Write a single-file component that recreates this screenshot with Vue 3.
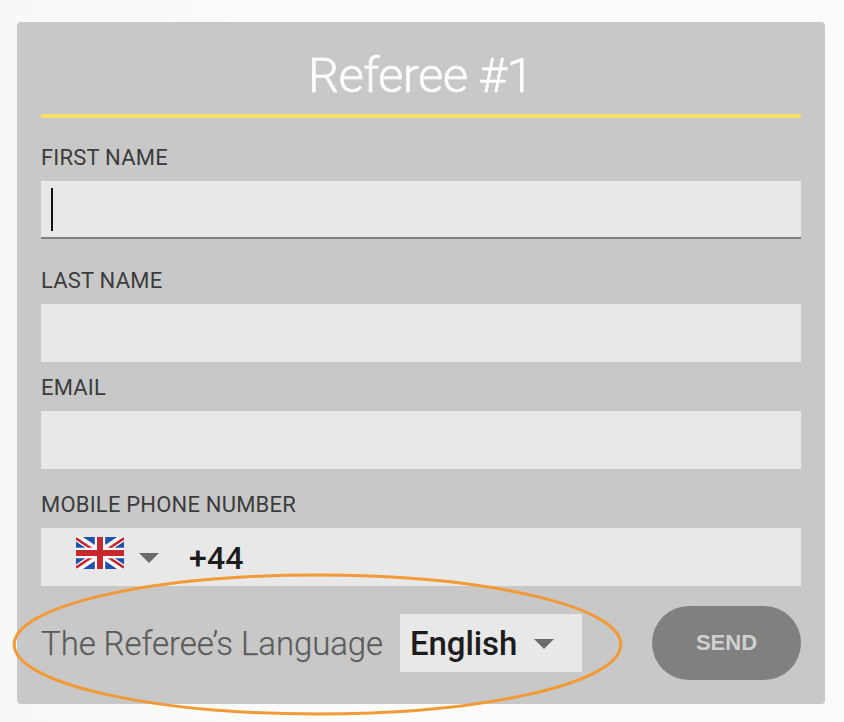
<template>
  <div class="page">
    <form class="card" @submit.prevent>
      <h1 class="title">Referee #1</h1>

      <div v-for="field in fields" :key="field.id" class="field" :class="field.id">
        <label class="label" :for="field.id">{{ field.label }}</label>
        <div class="input-box" :class="{ focused: field.id === active }">
          <span v-if="field.id === active" class="caret"></span>
          <input :id="field.id" v-model="field.value" class="input" type="text" />
        </div>
      </div>

      <div class="field phone">
        <label class="label" for="phone">MOBILE PHONE NUMBER</label>
        <div class="input-box">
          <svg class="flag" viewBox="0 0 48 32">
            <rect width="48" height="32" fill="#1e50b0" />
            <path d="M0 0L48 32M48 0L0 32" stroke="#fff" stroke-width="7.6" />
            <path
              d="M0 1.4L22 16M26 16L48 30.6M48 1.4L26 16M22 16L0 30.6"
              stroke="#c8282d"
              stroke-width="2.6"
            />
            <path d="M24 0V32M0 16H48" stroke="#fff" stroke-width="10.4" />
            <path d="M24 0V32M0 16H48" stroke="#c8282d" stroke-width="6" />
          </svg>
          <svg class="arrow" viewBox="0 0 20 10"><path d="M0 0H20L10 10Z" /></svg>
          <span class="code">+44</span>
        </div>
      </div>

      <div class="footer">
        <span class="language-label">The Referee’s Language</span>
        <div class="select">
          <span>English</span>
          <svg class="arrow" viewBox="0 0 20 10"><path d="M0 0H20L10 10Z" /></svg>
        </div>
        <button class="send" type="submit">SEND</button>
      </div>
    </form>

    <svg class="highlight" viewBox="0 0 612 144">
      <ellipse cx="305.5" cy="72.5" rx="303.3" ry="69.5" />
    </svg>
  </div>
</template>

<script setup>
import { ref } from 'vue';

const active = ref('first-name');

const fields = ref([
  { id: 'first-name', label: 'FIRST NAME', value: '' },
  { id: 'last-name', label: 'LAST NAME', value: '' },
  { id: 'email', label: 'EMAIL', value: '' },
]);
</script>

<style>
body {
  background: #fafafa;
}
</style>

<style scoped>
.page {
  position: relative;
  box-sizing: border-box;
  height: 722px;
  padding: 22px 19px 18px 17px;
  overflow: hidden;
  background: linear-gradient(90deg, #f8f8f8, #fcfcfc 45%, #fbfbfb);
  font-family: Roboto, sans-serif;
}

.card {
  box-sizing: border-box;
  height: 682px;
  padding: 0 24px;
  border-radius: 4px;
  background: #c8c8c8;
}

.title {
  margin: 0 0 27px;
  padding: 16px 1px 0 0;
  border-bottom: 4px solid #f7e065;
  color: #fff;
  font-size: 49px;
  font-weight: 300;
  line-height: 76px;
  letter-spacing: -0.7px;
  text-align: center;
  -webkit-text-stroke: 0.5px #fff;
}

.label {
  display: block;
  margin-bottom: 10px;
  color: #3c3c3c;
  font-size: 22px;
  line-height: 26px;
  letter-spacing: 0.2px;
}

.last-name {
  margin-top: 29px;
}

.email {
  margin-top: 13px;
}

.phone {
  margin-top: 23px;
}

.input-box {
  display: flex;
  box-sizing: border-box;
  height: 58px;
  background: #e8e8e8;
}

.input-box.focused {
  border-bottom: 2px solid #808080;
}

.caret {
  width: 2px;
  height: 43px;
  margin: 7px 0 0 10px;
  background: #111;
}

.input {
  flex: 1;
  min-width: 0;
  padding: 0 10px;
  border: 0;
  outline: 0;
  background: transparent;
  font: 32px Roboto, sans-serif;
}

.flag {
  width: 48px;
  height: 32px;
  margin: 9px 0 0 35px;
}

.arrow {
  width: 20px;
  height: 10px;
  fill: #6b6b6b;
}

.phone .arrow {
  margin: 25px 0 0 15px;
}

.code {
  margin-left: 30px;
  color: #1c1c1c;
  font-size: 32px;
  font-weight: 500;
  line-height: 60px;
  letter-spacing: 0.2px;
}

.footer {
  display: flex;
  align-items: center;
  height: 74px;
  margin-top: 20px;
}

.language-label {
  width: 359px;
  padding-top: 1px;
  color: #5c5c5c;
  font-size: 33px;
  font-weight: 300;
  letter-spacing: -0.08px;
  white-space: nowrap;
  -webkit-text-stroke: 0.25px #5c5c5c;
}

.select {
  display: flex;
  align-items: center;
  box-sizing: border-box;
  width: 182px;
  height: 58px;
  padding-left: 10px;
  background: #e8e8e8;
  color: #1c1c1c;
  font-size: 33px;
  font-weight: 500;
  letter-spacing: -0.1px;
}

.select .arrow {
  margin: 1px 0 0 17px;
}

.send {
  width: 149px;
  height: 74px;
  margin-left: auto;
  padding: 0;
  border: 0;
  border-radius: 37px;
  background: #808080;
  color: #d0d0d0;
  font: bold 22px "Liberation Sans", Arial, sans-serif;
}

/* hand-drawn callout round the language picker */
.highlight {
  position: absolute;
  top: 572px;
  left: 12px;
  width: 612px;
  height: 144px;
  fill: none;
  stroke: #f29a35;
  stroke-width: 3;
  pointer-events: none;
}
</style>
